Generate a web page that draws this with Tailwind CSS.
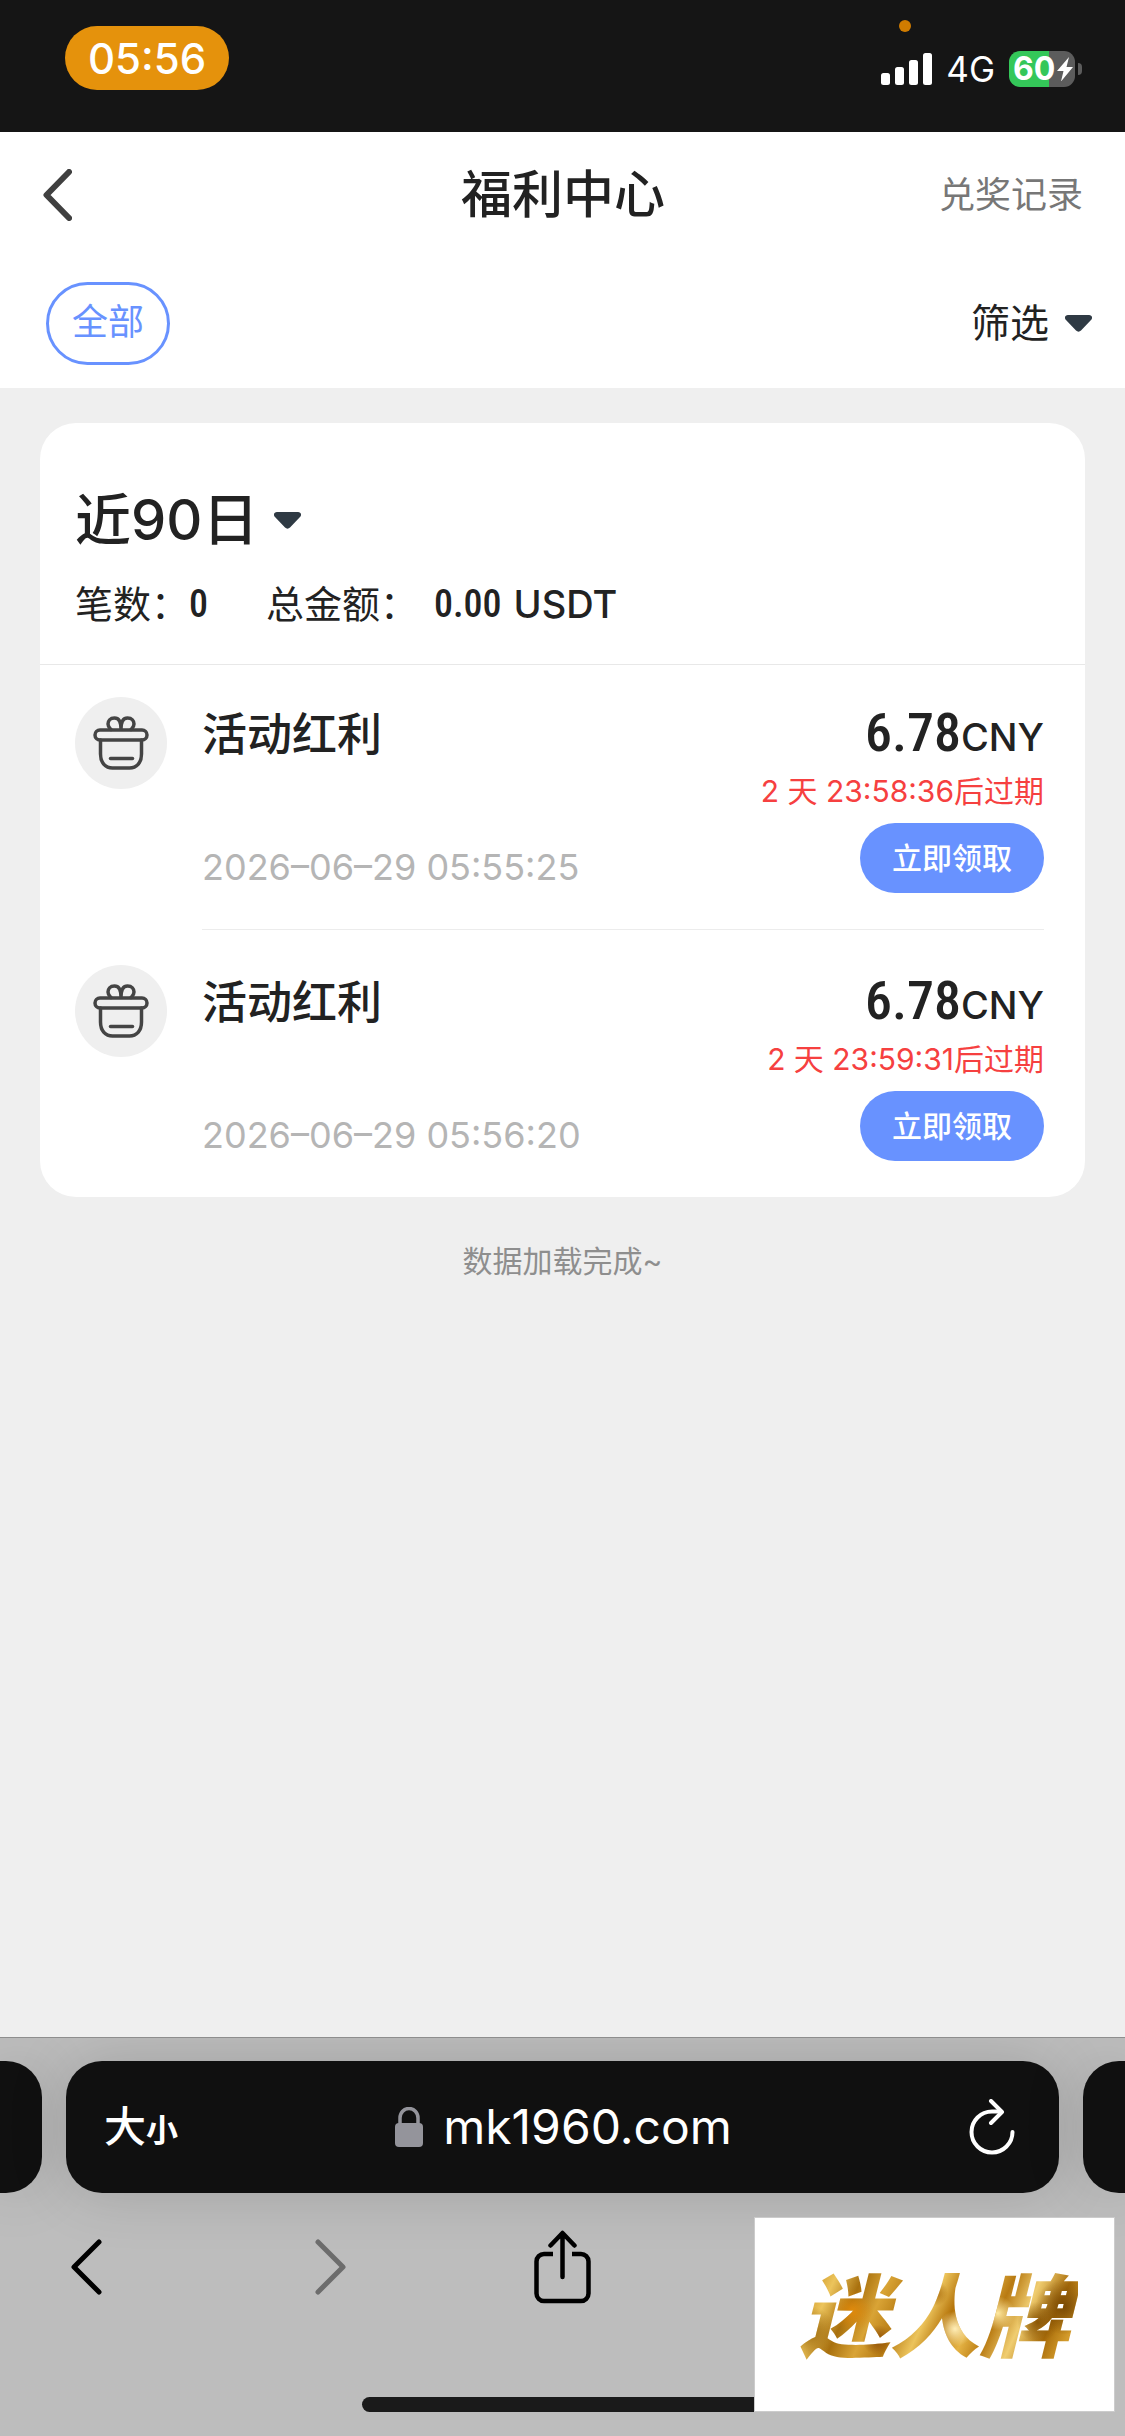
<!DOCTYPE html>
<html lang="zh-Hans">
<head>
    <meta charset="UTF-8">
    <meta name="viewport" content="width=device-width, initial-scale=1.0">
    <title>福利中心</title>
    <script src="https://cdn.jsdelivr.net/npm/@tailwindcss/browser@4"></script>
    <style>
        body {
            font-family: Inter, "Noto Sans CJK SC", sans-serif;
        }
        /* 窄体数字 */
        .num {
            font-family: "Roboto Condensed", "Liberation Sans Narrow", Roboto, sans-serif;
        }
        /* 金箔文字 */
        .gold {
            font-family: "Noto Sans CJK SC", sans-serif;
            color: transparent;
            background-image:
                radial-gradient(circle at 21% 50%, #e08a0c 0, transparent 9%),
                radial-gradient(circle at 6% 68%, #9c680c 0, transparent 9%),
                radial-gradient(circle at 30% 76%, #8f4f08 0, transparent 7%),
                radial-gradient(circle at 57% 66%, #ffeeb8 0, transparent 10%),
                radial-gradient(circle at 50% 34%, #a8690a 0, transparent 8%),
                radial-gradient(circle at 72% 52%, #ffe9a0 0, transparent 8%),
                radial-gradient(circle at 95% 46%, #7a4a04 0, transparent 10%),
                radial-gradient(circle at 86% 60%, #8a5606 0, transparent 8%),
                linear-gradient(115deg, #a86e0c 0%, #c98f1c 8%, #ecc45c 16%, #a8700e 24%, #d9a436 32%, #b67a12 40%, #ecc45c 48%, #b5740a 55%, #e5b344 62%, #b87a12 69%, #f0cd70 77%, #a86c0a 86%, #d49c2c 93%, #a06608 100%);
            -webkit-background-clip: text;
            background-clip: text;
        }
    </style>
</head>
<body class="flex min-h-screen flex-col bg-[#efefef] text-[#222]">

    <!-- 状态栏 -->
    <div class="relative flex h-[132px] items-start justify-between bg-[#151515] pl-[65px] pr-[43px] text-white">
        <div class="mt-[26px] flex h-16 w-[164px] items-center justify-center rounded-full bg-[#e5920c] text-[42px] font-medium">05:56</div>
        <span class="absolute right-[214px] top-5 size-3 rounded-full bg-[#d07c00]"></span>
        <div class="mt-[51px] flex h-9 items-center">
            <svg class="h-8 w-[51px]" viewBox="0 0 51 32" fill="currentColor">
                <rect x="0" y="20" width="9" height="12" rx="2.5"/>
                <rect x="14" y="14" width="9" height="18" rx="2.5"/>
                <rect x="28" y="7" width="9" height="25" rx="2.5"/>
                <rect x="42" y="0" width="9" height="32" rx="2.5"/>
            </svg>
            <span class="ml-[14px] text-[35px] leading-9">4G</span>
            <div class="relative ml-[14px] flex h-9 w-[66px] items-center rounded-[11px] bg-linear-to-r from-[#34c759] from-60% to-[#5c5c5c] to-60% pl-1">
                <span class="text-[32px] font-bold leading-9">60</span>
                <svg class="absolute right-[2px] top-[6px] h-6 w-4" viewBox="0 0 16 24" fill="currentColor"><path d="M12 0 0 14h6.500L4 24.500 16 10H9.500z"/></svg>
            </div>
            <span class="ml-[3px] h-3 w-1 rounded-r-full bg-[#5c5c5c]"></span>
        </div>
    </div>

    <header class="bg-white">
        <div class="grid h-[126px] grid-cols-[1fr_auto_1fr] items-center pl-[43px] pr-[42px]">
            <button type="button" aria-label="返回" class="justify-self-start text-[#404040]">
                <svg class="h-[52px] w-[29px]" viewBox="0 0 29 52" fill="none" stroke="currentColor" stroke-width="6" stroke-linecap="round" stroke-linejoin="round"><path d="M26 3 3.500 26 26 49"/></svg>
            </button>
            <h1 class="text-[51px] font-medium">福利中心</h1>
            <a href="#records" class="justify-self-end text-4xl text-[#777]">兑奖记录</a>
        </div>
        <div class="flex h-[130px] items-center justify-between pl-[46px] pr-[33px]">
            <button type="button" class="h-[83px] w-[124px] rounded-full border-3 border-[#6892ff] pb-[2px] text-4xl text-[#6892ff]">全部</button>
            <label class="flex items-center gap-4">
                <select aria-label="筛选" class="field-sizing-content appearance-none text-[39px] leading-[56px]">
                    <option>筛选</option>
                </select>
                <svg class="h-[17px] w-[27px]" viewBox="0 0 27 17" fill="#2f3a44"><path d="M3 0h21c3 0 4 3 2 5L16 15.500c-1.500 1.500-3.500 1.500-5 0L1 5C-1 3 0 0 3 0z"/></svg>
            </label>
        </div>
    </header>

    <main class="flex-1 px-10 pt-[35px]">
        <section class="rounded-[36px] bg-white">
            <div class="border-b border-[#e8e8e8] px-[35px] pb-9 pt-[61px]">
                <label class="flex items-center gap-4">
                    <select aria-label="时间范围" class="field-sizing-content appearance-none text-[56px] font-medium leading-[72px]">
                        <option>近90日</option>
                    </select>
                    <svg class="h-[17px] w-[27px]" viewBox="0 0 27 17" fill="#2f3a44"><path d="M3 0h21c3 0 4 3 2 5L16 15.500c-1.500 1.500-3.500 1.500-5 0L1 5C-1 3 0 0 3 0z"/></svg>
                </label>
                <p class="mt-6 flex text-[38px] leading-[48px]">
                    <span>笔数：</span><span class="num font-medium">0</span>
                    <span class="ml-[58px]">总金额：</span><span class="num ml-4 font-medium">0.00</span><span class="ml-3 font-medium">USDT</span>
                </p>
            </div>

            <ul>
                <li class="flex pl-[35px]">
                    <span class="mt-8 flex size-[92px] items-center justify-center rounded-full bg-[#efefef]">
                        <svg class="h-[54px] w-14" viewBox="0 0 56 54" fill="none" stroke="#444" stroke-width="3.500" stroke-linecap="round">
                            <rect x="2" y="14" width="52" height="10" rx="5"/>
                            <path d="M7.500 24v14c0 9 5 14 12 14h17c7 0 12-5 12-14V24"/>
                            <path d="M28 13c0-7-2-11-6.500-11S15 5 15 8s1.500 4 3 5.500M28 13c0-7 2-11 6.500-11S41 5 41 8s-1.500 4-3 5.500"/>
                            <path d="M17.500 42.500h22"/>
                        </svg>
                    </span>
                    <div class="ml-[35px] mr-[41px] flex flex-1 justify-between border-b border-[#ececec] pb-9 pt-[34px]">
                        <div class="flex flex-col justify-between">
                            <h2 class="text-[45px] font-medium leading-[72px]">活动红利</h2>
                            <time class="text-[36px] leading-[52px] text-[#b5b5b5]">2026–06–29 05:55:25</time>
                        </div>
                        <div class="flex flex-col items-end">
                            <p class="flex h-[72px] items-baseline leading-[68px]"><span class="num text-[54px] font-medium">6.78</span><span class="text-[38px] font-medium">CNY</span></p>
                            <p class="text-[30px] leading-10 text-[#f64040]">2 天 23:58:36后过期</p>
                            <button type="button" class="mt-3 h-[70px] w-[184px] rounded-full bg-[#6892ff] text-[30px] font-medium text-white">立即领取</button>
                        </div>
                    </div>
                </li>
                <li class="flex pl-[35px] pt-[3px]">
                    <span class="mt-8 flex size-[92px] items-center justify-center rounded-full bg-[#efefef]">
                        <svg class="h-[54px] w-14" viewBox="0 0 56 54" fill="none" stroke="#444" stroke-width="3.500" stroke-linecap="round">
                            <rect x="2" y="14" width="52" height="10" rx="5"/>
                            <path d="M7.500 24v14c0 9 5 14 12 14h17c7 0 12-5 12-14V24"/>
                            <path d="M28 13c0-7-2-11-6.500-11S15 5 15 8s1.500 4 3 5.500M28 13c0-7 2-11 6.500-11S41 5 41 8s-1.500 4-3 5.500"/>
                            <path d="M17.500 42.500h22"/>
                        </svg>
                    </span>
                    <div class="ml-[35px] mr-[41px] flex flex-1 justify-between pb-9 pt-[34px]">
                        <div class="flex flex-col justify-between">
                            <h2 class="text-[45px] font-medium leading-[72px]">活动红利</h2>
                            <time class="text-[36px] leading-[52px] text-[#b5b5b5]">2026–06–29 05:56:20</time>
                        </div>
                        <div class="flex flex-col items-end">
                            <p class="flex h-[72px] items-baseline leading-[68px]"><span class="num text-[54px] font-medium">6.78</span><span class="text-[38px] font-medium">CNY</span></p>
                            <p class="text-[30px] leading-10 text-[#f64040]">2 天 23:59:31后过期</p>
                            <button type="button" class="mt-3 h-[70px] w-[184px] rounded-full bg-[#6892ff] text-[30px] font-medium text-white">立即领取</button>
                        </div>
                    </div>
                </li>
            </ul>
        </section>
        <p class="mt-10 text-center text-[30px] leading-[48px] text-[#8e8e8e]">数据加载完成~</p>
    </main>

    <!-- 浏览器底栏 -->
    <footer class="relative overflow-hidden border-t border-[#8e8e8e] bg-[#bdbdbd] pt-[23px]">
        <div class="flex h-[132px] gap-6">
            <span class="w-[42px] rounded-r-[36px] bg-[#101010] shadow-[0_0_60px_rgba(0,0,0,0.15)]"></span>
            <div class="grid flex-1 grid-cols-[1fr_auto_1fr] items-center rounded-[36px] bg-[#101010] pl-[38px] pr-11 text-white shadow-[0_0_60px_rgba(0,0,0,0.15)]">
                <button type="button" aria-label="文字大小" class="flex items-baseline justify-self-start leading-none"><span class="text-[42px] font-medium">大</span><span class="text-[32px] font-bold">小</span></button>
                <button type="button" class="flex items-center gap-5 pl-2 text-5xl">
                    <svg class="h-10 w-7" viewBox="0 0 28 40"><rect x="0" y="16" width="28" height="24" rx="4" fill="#94949b"/><path d="M5 18v-7a9 9.500 0 0 1 18 0v7" fill="none" stroke="#94949b" stroke-width="3.500"/></svg>
                    <span>mk1960.com</span>
                </button>
                <button type="button" aria-label="刷新" class="justify-self-end">
                    <svg class="h-[56px] w-[46px]" viewBox="0 0 46 56" fill="none" stroke="currentColor" stroke-width="4" stroke-linecap="round" stroke-linejoin="round"><path d="M43.500 33a20.500 20.500 0 1 1-20.500-20.500h9"/><path d="M22 2l11 11L22 24"/></svg>
                </button>
            </div>
            <span class="w-[42px] rounded-l-[36px] bg-[#101010] shadow-[0_0_60px_rgba(0,0,0,0.15)]"></span>
        </div>
        <nav class="flex h-[148px] items-center justify-between px-[71px] text-black">
            <button type="button" aria-label="后退"><svg class="h-[56px] w-[31px]" viewBox="0 0 31 56" fill="none" stroke="currentColor" stroke-width="5" stroke-linecap="round" stroke-linejoin="round"><path d="M28 3 3 28l25 25"/></svg></button>
            <button type="button" aria-label="前进" class="pl-6 text-[#6c6c6c]"><svg class="h-[56px] w-[31px]" viewBox="0 0 31 56" fill="none" stroke="currentColor" stroke-width="5" stroke-linecap="round" stroke-linejoin="round"><path d="M3 3l25 25L3 53"/></svg></button>
            <button type="button" aria-label="分享"><svg class="h-[74px] w-[57px]" viewBox="0 0 57 74" fill="none" stroke="currentColor" stroke-width="4.500" stroke-linejoin="round"><path d="M19 24h-9a7.500 7.500 0 0 0-7.500 7.500v32A7.500 7.500 0 0 0 10 71h37a7.500 7.500 0 0 0 7.500-7.500v-32A7.500 7.500 0 0 0 47 24h-9"/><path d="M28.500 47V4M16.500 15.500 28.500 3l12 12.500" stroke-linecap="round"/></svg></button>
            <button type="button" aria-label="书签" class="pr-6"><svg class="h-[56px] w-[31px]" viewBox="0 0 31 56" fill="none" stroke="currentColor" stroke-width="4"><path d="M3 6h25v44L15.500 38 3 50z"/></svg></button>
            <button type="button" aria-label="标签页"><svg class="h-[56px] w-[31px]" viewBox="0 0 31 56" fill="none" stroke="currentColor" stroke-width="4"><rect x="3" y="15" width="25" height="26" rx="4"/></svg></button>
        </nav>
        <div class="mx-auto mb-6 mt-[56px] h-[15px] w-[401px] rounded-full bg-[#1a1a1a]"></div>
        <div class="absolute bottom-6 right-[10px] flex h-[195px] w-[361px] items-center justify-center border border-[#ccc] bg-white pb-2">
            <span class="gold px-2 text-[90px] font-black italic leading-[112px]">迷人牌</span>
        </div>
    </footer>

</body>
</html>
